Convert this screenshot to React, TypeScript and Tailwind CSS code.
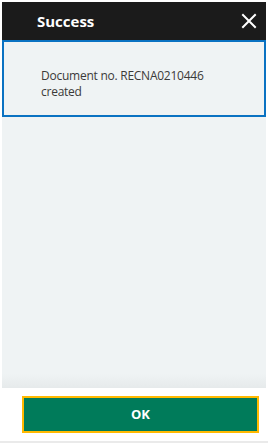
import React from "react";

export default function App() {
  return (
    <div className="w-[268px] h-[443px] bg-white pt-[2px] pl-[2px] pr-[2px] flex flex-col" style={{ fontFamily: '"Open Sans", "Noto Sans", sans-serif' }}>
      <div className="h-[38px] bg-[#1b1b1b] flex items-center justify-between pl-[35px] pr-[9px] shrink-0">
        <span className="text-white font-bold text-[15px] leading-none">Success</span>
        <svg width="16" height="16" viewBox="0 0 16 16">
          <path d="M2 2 L14 14 M14 2 L2 14" stroke="white" strokeWidth="2" strokeLinecap="square" />
        </svg>
      </div>
      <div className="flex-1 bg-[#eff3f4] flex flex-col">
        <div className="border-2 border-[#0a72c2] h-[77px] pl-[37px] pt-[26px] text-[12px] leading-[16px] tracking-[-0.25px] text-[#3b3a39]">
          <div>Document no. RECNA0210446</div>
          <div>created</div>
        </div>
        <div className="flex-1" />
        <div className="h-[14px] bg-gradient-to-b from-[#eff3f4] to-[#e6eaeb]" />
      </div>
      <div className="h-[53px] bg-white shrink-0 pl-[20px] pr-[7px] pt-[8px]">
        <button className="w-full h-[37px] bg-[#007b5a] border-2 border-[#ffb900] text-white font-bold text-[13px]">
          OK
        </button>
      </div>
      <div className="h-[2px] bg-[#eaeaea] -mx-[2px] shrink-0" />
    </div>
  );
}
